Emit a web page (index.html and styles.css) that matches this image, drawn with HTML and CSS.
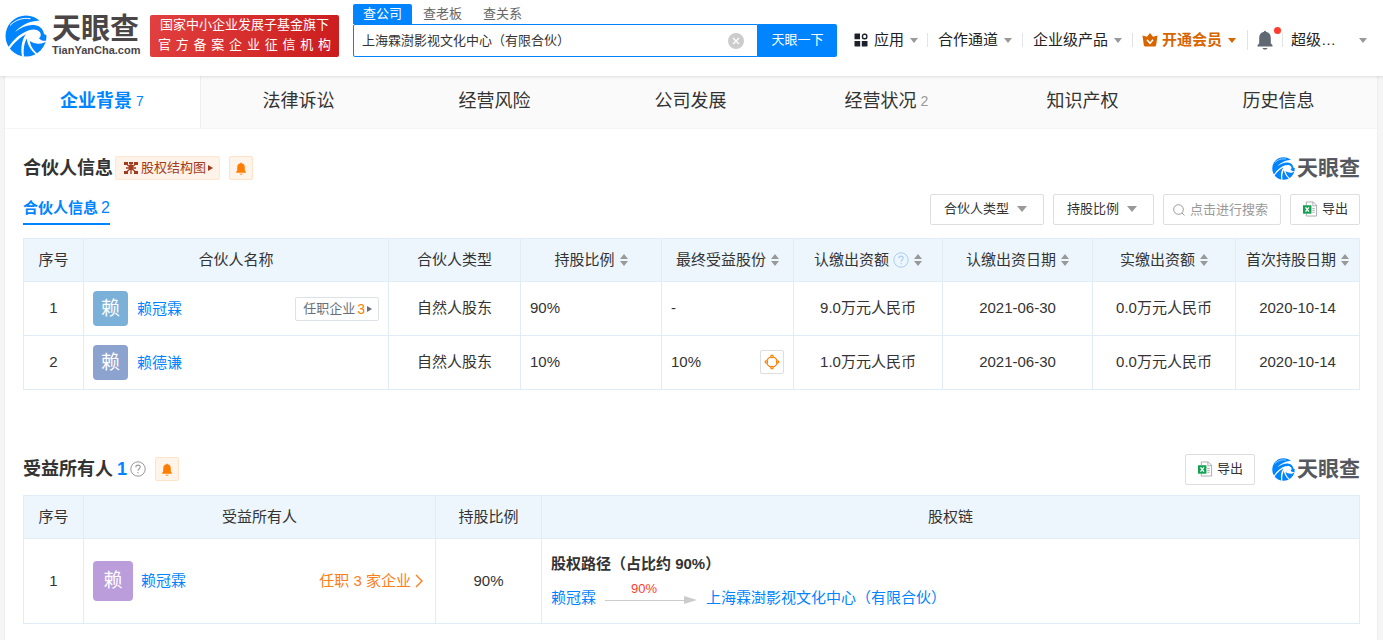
FILE: index.html
```html
<!DOCTYPE html>
<html lang="zh-CN">
<head>
<meta charset="utf-8">
<title>上海霖澍影视文化中心（有限合伙） - 天眼查</title>
<link rel="stylesheet" href="styles.css">
</head>
<body>
<svg class="sprite" aria-hidden="true">
  <symbol id="logo" viewBox="0 0 42 42">
    <circle cx="21" cy="21" r="20.500" fill="#0084ff"/>
    <path fill="#fff" d="M38 5.500C28 5 17 8.500 10 17c7-5.500 14-7.700 20.500-6.700 4.800 1 7.800 4 8.500 8.700L43 21V9Z"/>
    <path fill="#fff" d="M20.500 18.500c3.500-4.500 10.500-5.200 14-1.700 2 2.200 1.600 5-.6 6.500 2 2.300 4.800 3.100 8.100 2.200-2.500 2.700-6.800 3.600-10.500 3-4-.5-7.200-2.200-9.500-5.500Z"/>
    <path fill="#fff" d="M26 14.800C17 17 9 23.500 3.200 32.500l1.200 1.800C10.500 26 17 20.500 24 18Z"/>
    <path fill="#fff" d="M23 16.500c-6 6.500-7.700 15-6 25l2 .3c-1-9 .5-16.500 5.500-22.300Z"/>
    <path fill="#fff" d="M21.500 21c.2 7.500 3.200 13.300 9.400 18.500l1.500-1C27.200 34.500 24.800 29.500 24.500 23Z"/>
    <path fill="none" stroke="#fff" d="M5 10.500C10 5 18 2.200 25.500 3.800"/>
  </symbol>
  <symbol id="bell" viewBox="0 0 16 20">
    <path d="M7 1.800a1 1 0 0 1 2 0c3 .6 4.800 2.900 4.800 6v5.400l1.700 2v1.300H.5v-1.300l1.700-2V7.800c0-3.100 1.800-5.400 4.800-6ZM5.500 18h5c-.5 1-1.300 1.500-2.500 1.500S6 19 5.500 18Z"/>
  </symbol>
  <symbol id="help" viewBox="0 0 16 16">
    <circle cx="8" cy="8" r="7.200" fill="none" stroke="currentColor"/>
    <path d="M5.800 6.300c0-1.300.9-2.200 2.200-2.200s2.200.8 2.200 2c0 1.600-2.200 1.700-2.200 3.600M8 11v1.300" fill="none" stroke="currentColor" stroke-width="1.100"/>
  </symbol>
  <symbol id="sort" viewBox="0 0 8 12">
    <path fill="#999" d="M4 0l4 5H0ZM4 12l4-5H0Z"/>
  </symbol>
  <symbol id="excel" viewBox="0 0 16 16">
    <path fill="none" stroke="#a5aaad" d="M3.500 4V.5H11l3.500 3.500v11.500h-11V13M10.500.5v4h4M10 7.500h2.500M10 9.500h2.500M10 11.500h2.500"/>
    <path fill="#12a150" d="M0 4h9v9H0Z"/>
    <path stroke="#fff" stroke-width="1.500" d="M2.700 6.200l3.600 4.600M6.300 6.200l-3.600 4.600"/>
  </symbol>
</svg>

<header class="header">
  <a class="brand" href="#">
    <svg class="brand-icon"><use href="#logo"/></svg>
    <span class="brand-text"><b class="brand-cn">天眼查</b><b class="brand-en">TianYanCha.com</b></span>
  </a>
  <div class="badge"><span>国家中小企业发展子基金旗下</span><span class="badge-wide">官 方 备 案 企 业 征 信 机 构</span></div>
  <form class="search">
    <div class="search-tabs">
      <button type="button" class="search-tab is-active">查公司</button>
      <button type="button" class="search-tab">查老板</button>
      <button type="button" class="search-tab">查关系</button>
    </div>
    <div class="search-row">
      <div class="search-box">
        <input class="search-input" type="text" aria-label="搜索公司" value="上海霖澍影视文化中心（有限合伙）">
        <button type="button" class="clear" aria-label="清除"><svg viewBox="0 0 16 16"><circle cx="8" cy="8" r="8" fill="#ccc"/><path d="M5 5l6 6M11 5l-6 6" stroke="#fff" stroke-width="1.300"/></svg></button>
      </div>
      <button type="button" class="search-go">天眼一下</button>
    </div>
  </form>
  <nav class="menu">
    <a class="menu-item" href="#"><svg class="apps" viewBox="0 0 14 14"><path fill="#1d2129" d="M1 .5h5v5.700H.500V1ZM.500 8h5.700v5.500H1l-.5-.5ZM7.800 8h5.700v5l-.5.500H7.800Z"/><rect x="8.500" y="1.200" width="4.300" height="4.600" rx="1.800" fill="none" stroke="#1d2129" stroke-width="1.400"/></svg>应用<i class="caret"></i></a>
    <a class="menu-item" href="#">合作通道<i class="caret"></i></a>
    <a class="menu-item" href="#">企业级产品<i class="caret"></i></a>
    <a class="menu-item vip" href="#"><svg class="crown" viewBox="0 0 16 14"><path fill="#d86500" d="M8 0l3 3.800L15.500 2.500 14.200 12q-.2 1.500-1.700 1.500h-9Q2 13.500 1.800 12L.500 2.500 5 3.800Z"/><path d="M5 6.800l3 3.500 3-3.500" fill="none" stroke="#fff" stroke-width="1.600"/></svg>开通会员<i class="caret"></i></a>
    <a class="menu-item notice" href="#" aria-label="消息"><svg class="notice-bell"><use href="#bell"/></svg><i class="dot"></i></a>
    <a class="menu-item user" href="#"><span>超级…</span><i class="caret"></i></a>
  </nav>
</header>

<main class="card">
  <nav class="tabs">
    <a class="tab is-active" href="#"><b>企业背景</b><span class="count">7</span></a>
    <a class="tab" href="#">法律诉讼</a>
    <a class="tab" href="#">经营风险</a>
    <a class="tab" href="#">公司发展</a>
    <a class="tab" href="#">经营状况<span class="count">2</span></a>
    <a class="tab" href="#">知识产权</a>
    <a class="tab" href="#">历史信息</a>
  </nav>

  <section class="section">
    <div class="title-row">
      <h2 class="title">合伙人信息</h2>
      <a class="chart-link" href="#"><svg class="chart-icon" viewBox="0 0 14 12"><path fill="#a23c21" d="M0 0h4v3H0ZM10 0h4v3h-4ZM0 9h4v3H0ZM10 9h4v3h-4ZM5 0h4v2H5Z"/><path fill="none" stroke="#a23c21" stroke-width="1.300" d="M2 6h10M7 1v11M3 2.500L7 6l4-3.500M3 9.500L7 6l4 3.500M5 3.500h4"/></svg>股权结构图<i class="tri"></i></a>
      <button class="bell-button" aria-label="监控"><svg><use href="#bell"/></svg></button>
      <span class="mark"><svg class="mark-icon"><use href="#logo"/></svg><b>天眼查</b></span>
    </div>
    <div class="filter-row">
      <a class="subtab" href="#">合伙人信息<span>2</span></a>
      <div class="filters">
        <label class="select"><select aria-label="合伙人类型"><option>合伙人类型</option></select><i class="caret"></i></label>
        <label class="select"><select aria-label="持股比例"><option>持股比例</option></select><i class="caret"></i></label>
        <label class="find"><svg viewBox="0 0 12 12"><circle cx="5.500" cy="5.500" r="4.800" fill="none" stroke="#999"/><path d="M9 9l2.500 2.500" stroke="#999"/></svg><input type="text" aria-label="搜索" placeholder="点击进行搜索"></label>
        <button class="export"><svg><use href="#excel"/></svg>导出</button>
      </div>
    </div>
    <table class="table partners">
      <colgroup><col class="c-no"><col class="c-name"><col class="c-type"><col class="c-ratio"><col class="c-type"><col class="c-amount"><col class="c-date"><col class="c-paid"><col></colgroup>
      <thead>
        <tr>
          <th>序号</th><th>合伙人名称</th><th>合伙人类型</th>
          <th>持股比例<svg class="sort"><use href="#sort"/></svg></th>
          <th>最终受益股份<svg class="sort"><use href="#sort"/></svg></th>
          <th>认缴出资额<svg class="help help-blue"><use href="#help"/></svg><svg class="sort"><use href="#sort"/></svg></th>
          <th>认缴出资日期<svg class="sort"><use href="#sort"/></svg></th>
          <th>实缴出资额<svg class="sort"><use href="#sort"/></svg></th>
          <th>首次持股日期<svg class="sort"><use href="#sort"/></svg></th>
        </tr>
      </thead>
      <tbody>
        <tr>
          <td>1</td>
          <td><div class="person"><span class="avatar sky">赖</span><a href="#">赖冠霖</a><a class="jobs" href="#">任职企业<em>3</em><i class="tri"></i></a></div></td>
          <td>自然人股东</td><td class="left">90%</td><td class="left">-</td>
          <td>9.0万元人民币</td><td>2021-06-30</td><td>0.0万元人民币</td><td>2020-10-14</td>
        </tr>
        <tr>
          <td>2</td>
          <td><div class="person"><span class="avatar indigo">赖</span><a href="#">赖德谦</a></div></td>
          <td>自然人股东</td><td class="left">10%</td>
          <td><div class="benefit">10%<button class="path-button" aria-label="股权链"><svg viewBox="0 0 16 16" fill="none" stroke="#ff7d00"><circle cx="8" cy="8" r="5.200" stroke-width="1.200"/><g fill="#fff" stroke-width="1.200"><circle cx="8" cy="2.400" r="1.200"/><circle cx="13.600" cy="8" r="1.200"/><circle cx="8" cy="13.600" r="1.200"/><circle cx="2.400" cy="8" r="1.200"/></g></svg></button></div></td>
          <td>1.0万元人民币</td><td>2021-06-30</td><td>0.0万元人民币</td><td>2020-10-14</td>
        </tr>
      </tbody>
    </table>
  </section>

  <section class="section owners-section">
    <div class="title-row">
      <h2 class="title">受益所有人<span class="title-count">1</span></h2>
      <svg class="help"><use href="#help"/></svg>
      <button class="bell-button" aria-label="监控"><svg><use href="#bell"/></svg></button>
      <button class="export export-right"><svg><use href="#excel"/></svg>导出</button>
      <span class="mark"><svg class="mark-icon"><use href="#logo"/></svg><b>天眼查</b></span>
    </div>
    <table class="table owners">
      <colgroup><col class="c-no"><col class="c-owner"><col class="c-share"><col></colgroup>
      <thead><tr><th>序号</th><th>受益所有人</th><th>持股比例</th><th>股权链</th></tr></thead>
      <tbody>
        <tr>
          <td>1</td>
          <td><div class="person"><span class="avatar large violet">赖</span><a href="#">赖冠霖</a><a class="work" href="#">任职 3 家企业<svg viewBox="0 0 8 14"><path d="M1 1l6 6-6 6" fill="none" stroke="#ff7d18" stroke-width="1.400"/></svg></a></div></td>
          <td>90%</td>
          <td class="left">
            <b class="path-title">股权路径（占比约 90%）</b>
            <div class="path"><a href="#">赖冠霖</a><span class="arrow"><span>90%</span><svg viewBox="0 0 92 8"><path d="M0 4.500h80" stroke="#ccc"/><path d="M79 0l13 4-13 4Z" fill="#ccc"/></svg></span><a href="#">上海霖澍影视文化中心（有限合伙）</a></div>
          </td>
        </tr>
      </tbody>
    </table>
  </section>
</main>
</body>
</html>
```

FILE: styles.css
```css
* { box-sizing: border-box; }

body {
  margin: 0;
  min-height: 100vh;
  display: flex;
  flex-direction: column;
  background: #f5f5f5;
  color: #333;
  font: 15px/20px "Liberation Sans", "Noto Sans CJK SC", sans-serif;
}

a { color: #0084ff; text-decoration: none; }
button, input, select { font: inherit; color: inherit; }
button { padding: 0; border: 0; background: none; }
i, em { font-style: normal; }
svg { display: block; flex: none; }
.sprite { display: none; }

.caret {
  flex: none;
  border: 4px solid transparent;
  border-top: 5px solid #999;
  border-bottom: 0;
}
.tri {
  flex: none;
  border: 3px solid transparent;
  border-left: 5px solid currentColor;
  border-right: 0;
}

/* Header */
.header {
  position: relative;
  display: flex;
  height: 76px;
  padding: 0 16px 0 5px;
  background: #fff;
  box-shadow: 0 1px 3px rgba(0, 0, 0, .12);
}
.brand { display: flex; gap: 5px; height: 42px; margin-top: 15px; color: #4a4546; }
.brand-icon { width: 42px; height: 42px; }
.brand-text { display: flex; flex-direction: column; width: 89px; }
.brand-cn { font-size: 29px; line-height: 28px; }
.brand-en { font-size: 11px; line-height: 14px; }
.badge {
  display: flex;
  flex-direction: column;
  width: 189px;
  height: 42px;
  margin: 15px 14px 0 9px;
  padding: 0 8px;
  border-radius: 2px;
  background: linear-gradient(110deg, #e24040, #cb1c1c);
  color: #fff;
  font-size: 13px;
  white-space: nowrap;
  text-align: center;
}
.badge-wide { text-align-last: justify; }

.search { flex: 1 1 484px; max-width: 484px; padding-top: 4px; font-size: 13px; }
.search-tabs { display: flex; gap: 1px; }
.search-tab { height: 20px; padding: 0 10px; color: #666; }
.search-tab.is-active { border-radius: 2px 2px 0 0; background: #0084ff; color: #fff; }
.search-row { display: flex; height: 33px; }
.search-box {
  flex: 1;
  display: flex;
  align-items: center;
  padding: 0 13px 0 8px;
  border: 1px solid #0084ff;
  border-radius: 2px 0 0 2px;
}
.search-input { flex: 1; min-width: 0; padding: 0; border: 0; outline: 0; background: none; }
.clear svg { width: 16px; height: 16px; }
.search-go { width: 79px; padding-bottom: 2px; border-radius: 0 2px 2px 0; background: #0084ff; color: #fff; }

.menu { flex: 1; display: flex; align-items: center; height: 32px; margin: 24px 0 0 8px; }
.menu-item {
  display: flex;
  align-items: center;
  padding: 0 10px;
  border-left: 1px solid #e0e3e8;
  line-height: 14px;
  white-space: nowrap;
  color: #222;
}
.menu-item:first-child { padding: 0 9px; border-left: 0; }
.menu-item .caret { margin-left: 6px; }
.apps { width: 14px; height: 14px; margin-right: 6px; }
.crown { width: 16px; height: 14px; margin-right: 4px; }
.menu-item.vip { padding: 0 11px 0 9px; color: #d86500; font-weight: bold; }
.vip .caret { border-top-color: #d86500; }
.menu-item.notice { position: relative; padding: 0 9px; }
.notice-bell { width: 16px; height: 20px; fill: #606873; }
.dot { position: absolute; top: -3px; right: 1px; width: 7px; height: 7px; border-radius: 50%; background: #ff3b30; }
.menu-item.user { flex: 1; justify-content: space-between; padding: 0 0 0 8px; }

/* Card and main tabs */
.card { flex: 1; margin: 0 5px 0 4px; background: #fff; border: solid #eee; border-width: 0 1px; }
.tabs { display: grid; grid-template-columns: repeat(7, 1fr); height: 53px; border-bottom: 1px solid #f5f5f5; background: #fafafa; }
.tab { display: flex; align-items: center; justify-content: center; gap: 4px; padding: 0 1px 3px 0; color: #333; font-size: 18px; }
.tab.is-active { border-right: 1px solid #eee; background: #fff; color: #0084ff; }
.count { color: #999; font-size: 14px; }
.is-active .count { color: inherit; }

/* Sections */
.section { padding: 26px 17px 0 18px; }
.owners-section { padding-top: 66px; }
.title-row { display: flex; align-items: center; height: 26px; }
.title { margin: 0; font-size: 18px; line-height: 26px; }
.title-count { margin-left: 4px; color: #0084ff; }
.title-row .help { margin-left: 3px; color: #999; }
.chart-link {
  display: flex;
  align-items: center;
  height: 24px;
  margin-left: 2px;
  padding: 0 6px 0 8px;
  border: 1px solid #ffe6d1;
  border-radius: 2px;
  background: #fff2e8;
  color: #a23c21;
  font-size: 13px;
}
.chart-icon { width: 14px; height: 12px; margin-right: 3px; }
.chart-link .tri { margin-left: 2px; }
.bell-button {
  display: grid;
  place-items: center;
  width: 24px;
  height: 24px;
  margin-left: 9px;
  border: 1px solid #ffe3c8;
  border-radius: 2px;
  background: #fff4ea;
}
.bell-button svg { width: 12px; height: 13px; fill: #ff7d00; }
.mark { display: flex; align-items: center; gap: 2px; margin-left: auto; color: #55585e; font-size: 21px; }
.mark-icon { width: 23px; height: 23px; }

.filter-row { display: flex; justify-content: space-between; margin: 12px 0 13px; }
.subtab { height: 32px; padding-top: 5px; border-bottom: 2px solid #0084ff; font-weight: bold; }
.subtab span { margin-left: 3px; font-weight: normal; font-size: 16px; }
.filters { display: flex; gap: 9px; margin-top: 1px; font-size: 13px; }
.select { position: relative; display: flex; height: 31px; }
.select select {
  appearance: none;
  padding: 0 33px 2px 13px;
  border: 1px solid #dedede;
  border-radius: 2px;
  background: #fff;
}
.select .caret { position: absolute; top: 12px; right: 17px; border-width: 5px; border-top-width: 6px; border-bottom: 0; }
.find { display: flex; align-items: center; gap: 5px; width: 118px; height: 31px; padding: 0 9px; border: 1px solid #dedede; border-radius: 2px; }
.find svg { width: 12px; height: 12px; }
.find input { width: 82px; padding: 0; border: 0; outline: 0; }
.find input::placeholder { color: #999; }
.export {
  display: flex;
  align-items: center;
  gap: 4px;
  height: 31px;
  padding: 0 11px 1px 12px;
  border: 1px solid #dedede;
  border-radius: 2px;
  font-size: 13px;
}
.export svg { width: 15px; height: 16px; }
.export-right { margin-left: auto; }
.export-right + .mark { margin-left: 17px; }

/* Tables */
.table { width: 100%; table-layout: fixed; border-collapse: collapse; }
.table th, .table td { padding: 0 9px; border: 1px solid #e0ecf6; text-align: center; white-space: nowrap; }
.table th { height: 43px; padding: 0; background: #eef6fd; font-weight: normal; }
.table td { height: 54px; }
.table .left { text-align: left; }
.partners td { padding-bottom: 2px; }
.partners td:nth-child(2) { padding-bottom: 0; }
.owners { margin-top: 13px; }
.owners td { height: 85px; }
.c-no { width: 60px; }
.c-name { width: 305px; }
.c-type { width: 132px; }
.c-ratio { width: 141px; }
.c-amount { width: 149px; }
.c-date { width: 150px; }
.c-paid { width: 143px; }
.c-owner { width: 352px; }
.c-share { width: 106px; }
.sort { display: inline-block; width: 8px; height: 12px; margin-left: 5px; vertical-align: -1px; }
.help { width: 16px; height: 16px; }
.help-blue { display: inline-block; margin-left: 4px; color: #a8cdf0; vertical-align: -3px; }

.person { display: flex; align-items: center; }
.avatar { display: grid; place-items: center; width: 35px; height: 35px; margin-right: 9px; border-radius: 4px; color: #fff; font-size: 19px; }
.avatar.large { width: 40px; height: 40px; margin-right: 8px; }
.sky { background: #7bb1d9; }
.indigo { background: #8ca2cf; }
.violet { background: #bb9ddc; }
.jobs {
  display: flex;
  align-items: center;
  height: 24px;
  margin-left: auto;
  padding: 0 6px 0 7px;
  border: 1px solid #dde2e8;
  border-radius: 2px;
  color: #666f7a;
  font-size: 13px;
}
.jobs em { margin: 0 2px; color: #ff7d00; font-size: 14px; }
.benefit { display: flex; align-items: center; justify-content: space-between; }
.path-button { display: grid; place-items: center; width: 24px; height: 24px; border: 1px solid #dedede; border-radius: 2px; }
.path-button svg { width: 16px; height: 16px; }
.work { display: flex; align-items: center; gap: 4px; margin: 0 3px 0 auto; color: #ff7d18; }
.work svg { width: 8px; height: 14px; }
.path-title { display: block; margin-bottom: 8px; line-height: 20px; }
.path { display: flex; align-items: end; gap: 9px; }
.arrow { display: flex; flex-direction: column; align-items: center; width: 92px; height: 26px; color: #ff3b30; font-size: 13px; line-height: 14px; }
.arrow span { margin-right: 14px; }
.arrow svg { width: 92px; height: 8px; }
```
